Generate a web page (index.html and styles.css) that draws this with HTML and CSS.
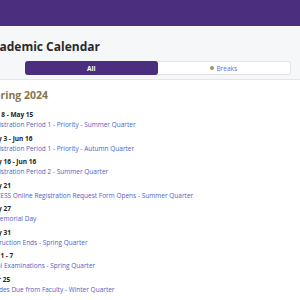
FILE: index.html
```html
<!DOCTYPE html>
<html lang="en">
<head>
  <meta charset="UTF-8" />
  <meta name="viewport" content="width=device-width, initial-scale=1.0"/>
  <title>Academic Calendar</title>
  <link rel="stylesheet" href="styles.css">
</head>
<body>
  <div class="page">
    <header class="topbar"></header>
    <section class="intro">
      <h1>Academic Calendar</h1>
      <div class="tabs">
        <button class="tab active">All</button>
        <button class="tab"><span class="dot"></span>Breaks</button>
      </div>
    </section>
    <section class="quarter">
      <h2>Spring 2024</h2>
      <ul class="events">
        <li><div class="date">Apr 8 - May 15</div><a href="#">Registration Period 1 - Priority - Summer Quarter</a></li>
        <li><div class="date">May 3 - Jun 16</div><a href="#">Registration Period 1 - Priority - Autumn Quarter</a></li>
        <li><div class="date">May 16 - Jun 16</div><a href="#">Registration Period 2 - Summer Quarter</a></li>
        <li><div class="date">May 21</div><a href="#">ACCESS Online Registration Request Form Opens - Summer Quarter</a></li>
        <li><div class="date">May 27</div><a href="#" class="break"><span class="dot"></span>Memorial Day</a></li>
        <li><div class="date">May 31</div><a href="#">Instruction Ends - Spring Quarter</a></li>
        <li><div class="date">Jun 1 - 7</div><a href="#">Final Examinations - Spring Quarter</a></li>
        <li><div class="date">Mar 25</div><a href="#">Grades Due from Faculty - Winter Quarter</a></li>
      </ul>
    </section>
  </div>
</body>
</html>
```

FILE: styles.css
```css
html, body { overflow: hidden; }
body { margin: 0; font-family: 'Open Sans', sans-serif; background: #fff; color: #222; }
.page { margin-left: -12px; width: 340px; }
.topbar { height: 26px; background: #4b2e7d; }
.intro { background: #f6f7f9; border-bottom: 1px solid #e4e5e8; padding: 13px 0 4px; }
h1 { margin: 0 0 6px -3px; font-size: 12px; line-height: 16px; font-weight: 700; color: #2a2a2e; }
.tabs { display: flex; margin: 0 37px; height: 14px; border: 1px solid #e3e4e8; border-radius: 3px; background: #fff; box-sizing: border-box; }
.tab { flex: 1; display: flex; align-items: center; justify-content: center; border: none; background: none; padding: 0; font-family: 'Open Sans', sans-serif; font-size: 6.5px; color: #5c6fd0; cursor: pointer; }
.tab.active { margin: -1px 0 -1px -1px; background: #4b2e7d; color: #fff; font-weight: 700; border-radius: 3px; }
.dot { display: inline-block; width: 4px; height: 4px; border-radius: 50%; background: #a39261; margin-right: 2px; }
.quarter { padding: 8px 0 0; }
h2 { margin: 0 0 8px; font-size: 10.5px; line-height: 14px; font-weight: 700; color: #85754d; }
.events { list-style: none; margin: 0; padding: 0; display: flex; flex-direction: column; gap: 3.5px; }
.date { font-size: 6.5px; line-height: 10px; font-weight: 700; color: #222; }
.events a { display: block; font-size: 6.5px; line-height: 10px; color: #4f62c6; text-decoration: none; }
.events a .dot { vertical-align: 0; }
```
